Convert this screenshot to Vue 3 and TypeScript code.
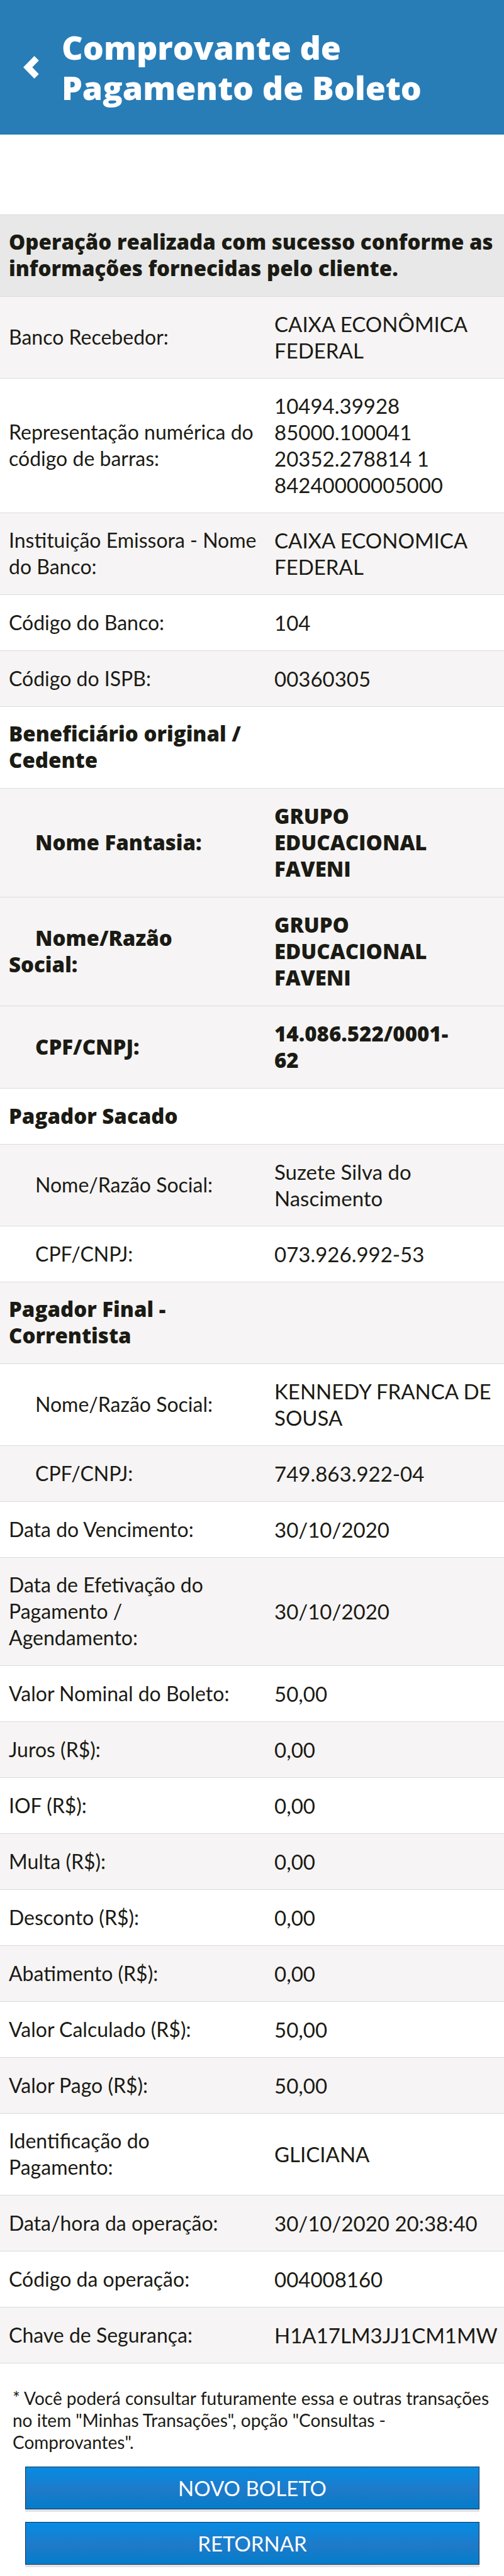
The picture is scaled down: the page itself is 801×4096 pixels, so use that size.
<script setup lang="ts">
interface Row {
  label: string[]
  value: string[]
  shaded: boolean
  bold?: boolean
  indent?: boolean
}

const rows: Row[] = [
  { label: ['Banco Recebedor:'], value: ['CAIXA ECONÔMICA', 'FEDERAL'], shaded: true },
  {
    label: ['Representação numérica do', 'código de barras:'],
    value: ['10494.39928', '85000.100041', '20352.278814 1', '84240000005000'],
    shaded: false,
  },
  { label: ['Instituição Emissora - Nome', 'do Banco:'], value: ['CAIXA ECONOMICA', 'FEDERAL'], shaded: true },
  { label: ['Código do Banco:'], value: ['104'], shaded: false },
  { label: ['Código do ISPB:'], value: ['00360305'], shaded: true },
  { label: ['Beneficiário original /', 'Cedente'], value: [], shaded: false, bold: true },
  { label: ['Nome Fantasia:'], value: ['GRUPO', 'EDUCACIONAL', 'FAVENI'], shaded: true, bold: true, indent: true },
  { label: ['Nome/Razão', 'Social:'], value: ['GRUPO', 'EDUCACIONAL', 'FAVENI'], shaded: true, bold: true, indent: true },
  { label: ['CPF/CNPJ:'], value: ['14.086.522/0001-', '62'], shaded: true, bold: true, indent: true },
  { label: ['Pagador Sacado'], value: [], shaded: false, bold: true },
  { label: ['Nome/Razão Social:'], value: ['Suzete Silva do', 'Nascimento'], shaded: true, indent: true },
  { label: ['CPF/CNPJ:'], value: ['073.926.992-53'], shaded: false, indent: true },
  { label: ['Pagador Final -', 'Correntista'], value: [], shaded: true, bold: true },
  { label: ['Nome/Razão Social:'], value: ['KENNEDY FRANCA DE', 'SOUSA'], shaded: false, indent: true },
  { label: ['CPF/CNPJ:'], value: ['749.863.922-04'], shaded: true, indent: true },
  { label: ['Data do Vencimento:'], value: ['30/10/2020'], shaded: false },
  { label: ['Data de Efetivação do', 'Pagamento /', 'Agendamento:'], value: ['30/10/2020'], shaded: true },
  { label: ['Valor Nominal do Boleto:'], value: ['50,00'], shaded: false },
  { label: ['Juros (R$):'], value: ['0,00'], shaded: true },
  { label: ['IOF (R$):'], value: ['0,00'], shaded: false },
  { label: ['Multa (R$):'], value: ['0,00'], shaded: true },
  { label: ['Desconto (R$):'], value: ['0,00'], shaded: false },
  { label: ['Abatimento (R$):'], value: ['0,00'], shaded: true },
  { label: ['Valor Calculado (R$):'], value: ['50,00'], shaded: false },
  { label: ['Valor Pago (R$):'], value: ['50,00'], shaded: true },
  { label: ['Identificação do', 'Pagamento:'], value: ['GLICIANA'], shaded: false },
  { label: ['Data/hora da operação:'], value: ['30/10/2020 20:38:40'], shaded: true },
  { label: ['Código da operação:'], value: ['004008160'], shaded: false },
  { label: ['Chave de Segurança:'], value: ['H1A17LM3JJ1CM1MW'], shaded: true },
]
</script>

<template>
  <div class="page">
    <header class="bar">
      <button class="back" type="button" aria-label="Voltar">
        <svg viewBox="0 0 25 36" width="25" height="36" aria-hidden="true">
          <path d="M0 18 17.6 0 24.7 7.2 14.3 18 24.7 28.8 17.6 36Z" fill="#fff" />
        </svg>
      </button>
      <h1 class="title">Comprovante de<br />Pagamento de Boleto</h1>
    </header>

    <main>
      <table class="receipt">
        <colgroup>
          <col class="col-label" />
          <col />
        </colgroup>
        <thead>
          <tr>
            <th class="notice" colspan="2" scope="colgroup">
              Operação realizada com sucesso conforme as<br />informações fornecidas pelo cliente.
            </th>
          </tr>
        </thead>
        <tbody>
          <tr v-for="(row, i) in rows" :key="i" :class="{ shaded: row.shaded, bold: row.bold, indent: row.indent }">
            <th scope="row">
              <template v-for="(line, n) in row.label" :key="n"><br v-if="n" />{{ line }}</template>
            </th>
            <td>
              <template v-for="(line, n) in row.value" :key="n"><br v-if="n" />{{ line }}</template>
            </td>
          </tr>
        </tbody>
      </table>

      <p class="note">
        * Você poderá consultar futuramente essa e outras transações<br />
        no item "Minhas Transações", opção "Consultas -<br />
        Comprovantes".
      </p>

      <div class="actions">
        <button class="action" type="button">NOVO BOLETO</button>
        <button class="action" type="button">RETORNAR</button>
      </div>
    </main>
  </div>
</template>

<style>
body {
  margin: 0;
  background: #fff;
}
</style>

<style scoped>
.page {
  font-family: Lato, "Open Sans", sans-serif;
  color: #1b1b14;
  white-space: nowrap;
}

.bar {
  display: flex;
  align-items: center;
  gap: 36px;
  box-sizing: border-box;
  height: 214px;
  padding-left: 37px;
  background: #287db7;
}

.back {
  display: flex;
  padding: 0;
  border: 0;
  background: none;
  cursor: pointer;
}

.title {
  margin: 0;
  color: #fff;
  font-family: "Open Sans", Lato, sans-serif;
  font-size: 52px;
  font-weight: 800;
  line-height: 64px;
}

.receipt {
  width: 100%;
  margin-top: 127px;
  border-spacing: 0;
  table-layout: fixed;
  border-top: 1px solid #dcdcdd;
  font-size: 32px;
  line-height: 42px;
}

.col-label {
  width: 422px;
}

.receipt tr {
  height: 89px;
}

.receipt th,
.receipt td {
  padding: 22px 0 23px 14px;
  border-bottom: 1px solid #dcdcdd;
  font-weight: 400;
  text-align: left;
  vertical-align: middle;
}

.receipt td {
  font-size: 33px;
}

.receipt .notice,
.receipt .bold th,
.receipt .bold td {
  font-family: "Open Sans", Lato, sans-serif;
  font-size: 33px;
  font-weight: 800;
}

.receipt .notice {
  background: #e8e8e8;
}

.receipt .bold.indent th,
.receipt .bold.indent td {
  padding-top: 23px;
}

.shaded {
  background: #f6f4f5;
}

.indent th {
  text-indent: 42px;
}

.note {
  margin: 38px 20px 0;
  font-size: 28px;
  line-height: 35px;
}

.actions {
  display: flex;
  flex-direction: column;
  gap: 20px;
  margin: 21px 39px 19px 40px;
}

.action {
  height: 68px;
  padding: 0;
  border: 1px solid #1b2f57;
  background: linear-gradient(#058ce3, #1f7ac9 55%, #027dca);
  box-shadow: 0 4px 0 #e2e2e5;
  color: #fff;
  font-family: inherit;
  font-size: 33px;
  line-height: 40px;
  cursor: pointer;
}
</style>
